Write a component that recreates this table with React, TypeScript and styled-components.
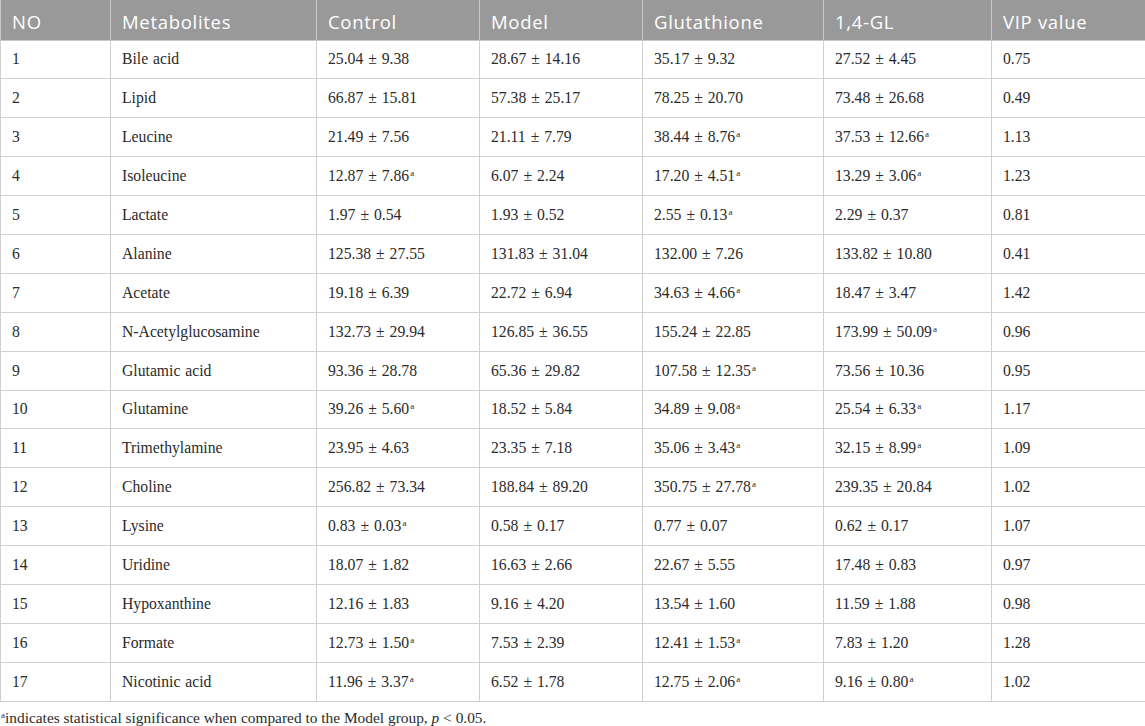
import React from "react";
import styled, { createGlobalStyle } from "styled-components";

const GlobalStyle = createGlobalStyle`
  html, body { margin: 0; padding: 0; background: #ffffff; }
  body { font-family: "Liberation Serif", "Times New Roman", serif; color: #2b2b2b; }
`;

const Page = styled.div`
  width: 1145px;
  display: flex;
  flex-direction: column;
`;

const Table = styled.table`
  width: 1145px;
  border-collapse: collapse;
  table-layout: fixed;
`;

const HeadCell = styled.th<{ $w: number }>`
  width: ${(p) => p.$w}px;
  height: 40px;
  padding: 3px 0 0 11px;
  background: #999999;
  color: #ffffff;
  font-family: "Open Sans", "Noto Sans", sans-serif;
  font-weight: 400;
  font-size: 18.5px;
  letter-spacing: 0.7px;
  text-align: left;
  border: 1px solid #c8c8c8;
  border-top: none;
  box-sizing: border-box;
  white-space: nowrap;
`;

const Row = styled.tr`
  height: 38.9px;
`;

const Cell = styled.td`
  padding: 0 0 0 11px;
  font-family: "Liberation Serif", "Times New Roman", serif;
  font-size: 15.7px;
  word-spacing: 1px;
  color: #2b2b2b;
  border: 1px solid #cfcfcf;
  white-space: nowrap;
  vertical-align: middle;
`;

const Sup = styled.sup`
  font-size: 9px;
  line-height: 0;
  vertical-align: 5px;
  margin-left: 1px;
`;

const Footnote = styled.p`
  margin: 8px 0 0 0;
  font-family: "Liberation Serif", "Times New Roman", serif;
  font-size: 15.4px;
  color: #2b2b2b;
  line-height: 16px;
`;

const Italic = styled.i`
  font-style: italic;
`;

const widths = [110, 206, 163, 163, 181, 168, 154];
const heads = ["NO", "Metabolites", "Control", "Model", "Glutathione", "1,4-GL", "VIP value"];

type RowData = [string, string, string, string, string, string, string];

const rows: RowData[] = [
  ["1", "Bile acid", "25.04 ± 9.38", "28.67 ± 14.16", "35.17 ± 9.32", "27.52 ± 4.45", "0.75"],
  ["2", "Lipid", "66.87 ± 15.81", "57.38 ± 25.17", "78.25 ± 20.70", "73.48 ± 26.68", "0.49"],
  ["3", "Leucine", "21.49 ± 7.56", "21.11 ± 7.79", "38.44 ± 8.76^", "37.53 ± 12.66^", "1.13"],
  ["4", "Isoleucine", "12.87 ± 7.86^", "6.07 ± 2.24", "17.20 ± 4.51^", "13.29 ± 3.06^", "1.23"],
  ["5", "Lactate", "1.97 ± 0.54", "1.93 ± 0.52", "2.55 ± 0.13^", "2.29 ± 0.37", "0.81"],
  ["6", "Alanine", "125.38 ± 27.55", "131.83 ± 31.04", "132.00 ± 7.26", "133.82 ± 10.80", "0.41"],
  ["7", "Acetate", "19.18 ± 6.39", "22.72 ± 6.94", "34.63 ± 4.66^", "18.47 ± 3.47", "1.42"],
  ["8", "N-Acetylglucosamine", "132.73 ± 29.94", "126.85 ± 36.55", "155.24 ± 22.85", "173.99 ± 50.09^", "0.96"],
  ["9", "Glutamic acid", "93.36 ± 28.78", "65.36 ± 29.82", "107.58 ± 12.35^", "73.56 ± 10.36", "0.95"],
  ["10", "Glutamine", "39.26 ± 5.60^", "18.52 ± 5.84", "34.89 ± 9.08^", "25.54 ± 6.33^", "1.17"],
  ["11", "Trimethylamine", "23.95 ± 4.63", "23.35 ± 7.18", "35.06 ± 3.43^", "32.15 ± 8.99^", "1.09"],
  ["12", "Choline", "256.82 ± 73.34", "188.84 ± 89.20", "350.75 ± 27.78^", "239.35 ± 20.84", "1.02"],
  ["13", "Lysine", "0.83 ± 0.03^", "0.58 ± 0.17", "0.77 ± 0.07", "0.62 ± 0.17", "1.07"],
  ["14", "Uridine", "18.07 ± 1.82", "16.63 ± 2.66", "22.67 ± 5.55", "17.48 ± 0.83", "0.97"],
  ["15", "Hypoxanthine", "12.16 ± 1.83", "9.16 ± 4.20", "13.54 ± 1.60", "11.59 ± 1.88", "0.98"],
  ["16", "Formate", "12.73 ± 1.50^", "7.53 ± 2.39", "12.41 ± 1.53^", "7.83 ± 1.20", "1.28"],
  ["17", "Nicotinic acid", "11.96 ± 3.37^", "6.52 ± 1.78", "12.75 ± 2.06^", "9.16 ± 0.80^", "1.02"],
];

const Value: React.FC<{ text: string }> = ({ text }) =>
  text.endsWith("^") ? (
    <>
      {text.slice(0, -1)}
      <Sup>a</Sup>
    </>
  ) : (
    <>{text}</>
  );

export default function App() {
  return (
    <Page>
      <GlobalStyle />
      <Table>
        <thead>
          <tr>
            {heads.map((h, i) => (
              <HeadCell key={h} $w={widths[i]}>
                {h}
              </HeadCell>
            ))}
          </tr>
        </thead>
        <tbody>
          {rows.map((r) => (
            <Row key={r[0]}>
              {r.map((c, i) => (
                <Cell key={i}>
                  <Value text={c} />
                </Cell>
              ))}
            </Row>
          ))}
        </tbody>
      </Table>
      <Footnote>
        <Sup>a</Sup>indicates statistical significance when compared to the Model group, <Italic>p</Italic> &lt; 0.05.
      </Footnote>
    </Page>
  );
}
